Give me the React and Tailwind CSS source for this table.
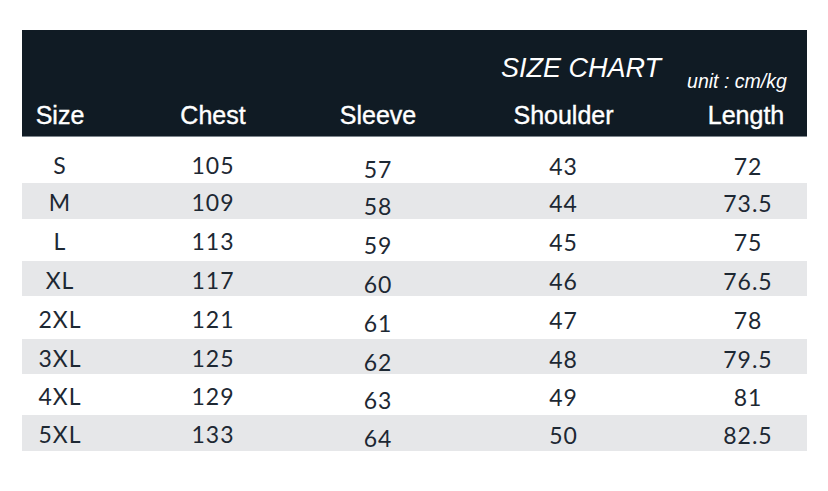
import React from "react";

const rows = [
  { size: "S", chest: "105", sleeve: "57", shoulder: "43", length: "72", h: "h-[46px] pt-[10px]", bg: "bg-white" },
  { size: "M", chest: "109", sleeve: "58", shoulder: "44", length: "73.5", h: "h-[36px] pt-[3px]", bg: "bg-[#e6e7e9]" },
  { size: "L", chest: "113", sleeve: "59", shoulder: "45", length: "75", h: "h-[42px] pt-[3px]", bg: "bg-white" },
  { size: "XL", chest: "117", sleeve: "60", shoulder: "46", length: "76.5", h: "h-[35px] pt-[3px]", bg: "bg-[#e6e7e9]" },
  { size: "2XL", chest: "121", sleeve: "61", shoulder: "47", length: "78", h: "h-[43px] pt-[3px]", bg: "bg-white" },
  { size: "3XL", chest: "125", sleeve: "62", shoulder: "48", length: "79.5", h: "h-[35px] pt-[3px]", bg: "bg-[#e6e7e9]" },
  { size: "4XL", chest: "129", sleeve: "63", shoulder: "49", length: "81", h: "h-[41px] pt-[3px]", bg: "bg-white" },
  { size: "5XL", chest: "133", sleeve: "64", shoulder: "50", length: "82.5", h: "h-[36px] pt-[3px]", bg: "bg-[#e6e7e9]" },
];

const cols = "grid grid-cols-[76px_230px_100px_271px_108px]";

export default function App() {
  return (
    <div className="w-[828px] h-[491px] bg-white pt-[30px] pl-[22px]">
      <div className="w-[785px]">
        <div
          className="h-[107px] bg-[#101b24] border-b border-[#7d858c] pt-[25px] text-white"
          style={{ fontFamily: '"Liberation Sans", Arial, sans-serif' }}
        >
          <div className="h-[48px] flex items-start pl-[479px]">
            <div className="text-[27px] leading-none italic whitespace-nowrap">SIZE CHART</div>
            <div className="ml-[26px] mt-[17px] text-[19.5px] leading-none italic whitespace-nowrap">
              unit : cm/kg
            </div>
          </div>
          <div className={`${cols} h-[25px] text-[25px] leading-none [-webkit-text-stroke:0.4px_white]`}>
            <div className="text-center">Size</div>
            <div className="text-center">Chest</div>
            <div className="text-center">Sleeve</div>
            <div className="text-center">Shoulder</div>
            <div className="text-center pr-[14px]">Length</div>
          </div>
        </div>
        <div
          className="text-[#1d2833] text-[23px] leading-none tracking-[1px]"
          style={{ fontFamily: "Lato, 'Noto Sans', sans-serif" }}
        >
          {rows.map((r) => (
            <div key={r.size} className={`${cols} items-center ${r.h} ${r.bg}`}>
              <div className="text-center">{r.size}</div>
              <div className="text-center">{r.chest}</div>
              <div className="text-center translate-y-[4px]">{r.sleeve}</div>
              <div className="text-center translate-y-[1px]">{r.shoulder}</div>
              <div className="text-center pr-[10px] translate-y-[1px]">{r.length}</div>
            </div>
          ))}
        </div>
      </div>
    </div>
  );
}
